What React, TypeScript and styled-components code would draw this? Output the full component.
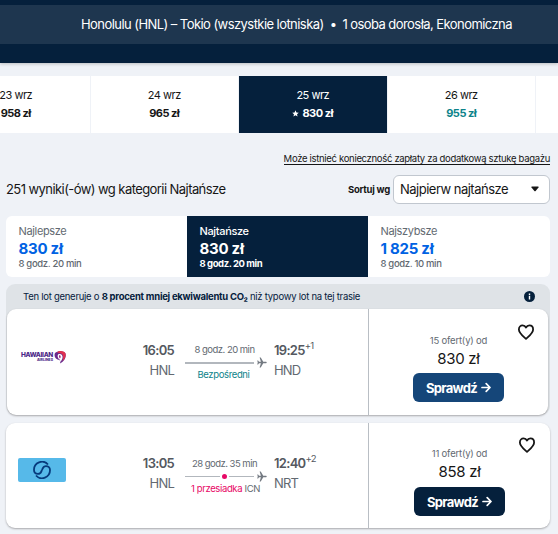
import React, { useState } from 'react';
import styled, { createGlobalStyle } from 'styled-components';

const GlobalStyle = createGlobalStyle`
  * {
    box-sizing: border-box;
  }

  body {
    margin: 0;
    background: #eff2f7;
    color: #161616;
    font-family: Inter, 'Noto Sans', sans-serif;
    overflow: hidden;
  }

  button {
    font-family: inherit;
    border: none;
    cursor: pointer;
  }
`;

const Page = styled.div`
  width: 558px;
  height: 534px;
  overflow: hidden;
  white-space: nowrap;
`;

const Header = styled.header`
  height: 63px;
  padding: 5px 0 19px;
  background: #05203c;
  box-shadow: 0 1px 3px rgba(37, 32, 31, 0.25);
`;

const SearchSummary = styled.div`
  height: 39px;
  padding: 0 0 1px 35px;
  display: flex;
  align-items: center;
  justify-content: center;
  background: #1e364f;
  color: #fff;
  font-size: 13px;
  letter-spacing: -0.56px;
`;

const Dot = styled.span`
  margin: 0 6px;
`;

const DateStrip = styled.div`
  display: grid;
  grid-template-columns: repeat(5, 148.5px);
  height: 57px;
  margin: 13px 0 0 -58px;
`;

const DateCell = styled.button<{ $selected?: boolean; $low?: boolean }>`
  display: flex;
  flex-direction: column;
  align-items: center;
  padding: 10px 0 0;
  border-right: 1px solid #eff2f7;
  background: ${({ $selected }) => ($selected ? '#05203c' : '#fff')};
  color: ${({ $selected }) => ($selected ? '#fff' : '#161616')};
  font-size: 11px;
  line-height: 18px;
  letter-spacing: -0.5px;

  strong {
    display: flex;
    align-items: center;
    gap: 3px;
    color: ${({ $low }) => ($low ? '#0c838a' : 'inherit')};
    font-weight: 700;
  }
`;

const Content = styled.main`
  padding: 17px 8px 0 6px;
`;

const BaggageLink = styled.a`
  display: block;
  width: max-content;
  height: 15px;
  margin-left: auto;
  border-bottom: 1px solid #161616;
  font-size: 9.5px;
  line-height: 18px;
  letter-spacing: -0.31px;
`;

const Toolbar = styled.div`
  display: flex;
  align-items: center;
  height: 29px;
  margin: 10px 0 12px;
`;

const ResultCount = styled.span`
  flex: 1;
  padding-bottom: 2px;
  font-size: 13px;
  letter-spacing: -0.57px;
`;

const SortLabel = styled.label`
  margin-right: 3px;
  padding-bottom: 1px;
  font-size: 9.5px;
  font-weight: 700;
  letter-spacing: -0.25px;
`;

const SortSelect = styled.button`
  display: flex;
  align-items: center;
  justify-content: space-between;
  width: 157px;
  height: 29px;
  padding: 0 10px 1px 6px;
  border: 1px solid #c1c7cf;
  border-radius: 6px;
  background: #fff;
  color: #161616;
  font-size: 13px;
  letter-spacing: -0.5px;
`;

const Tabs = styled.div`
  display: grid;
  grid-template-columns: 181px 181px 182px;
  height: 61px;
  border-radius: 6px;
  overflow: hidden;
`;

const Tab = styled.button<{ $active: boolean }>`
  display: flex;
  flex-direction: column;
  align-items: flex-start;
  padding: 7px 12.5px 0;
  background: ${({ $active }) => ($active ? '#05203c' : '#fff')};
  color: ${({ $active }) => ($active ? '#fff' : '#626971')};
`;

const TabName = styled.span<{ $active: boolean }>`
  font-size: 11px;
  font-weight: ${({ $active }) => ($active ? 500 : 400)};
  line-height: 16px;
  letter-spacing: -0.35px;
`;

const TabPrice = styled.span<{ $active: boolean }>`
  color: ${({ $active }) => ($active ? '#fff' : '#0062e3')};
  font-size: 15px;
  font-weight: 700;
  line-height: 19px;
  letter-spacing: -0.25px;
`;

const TabDuration = styled.span<{ $active: boolean }>`
  font-size: 9.5px;
  font-weight: ${({ $active }) => ($active ? 700 : 500)};
  line-height: 12px;
  letter-spacing: ${({ $active }) => ($active ? -0.42 : -0.34)}px;
`;

const EcoGroup = styled.section`
  margin: 7px 0 8px;
  padding: 0 2px 0 1px;
  border-radius: 9px;
  background: #dfe3e7;
`;

const EcoBanner = styled.div`
  display: flex;
  align-items: center;
  justify-content: space-between;
  height: 25px;
  padding: 0 13px 0 16px;
  color: #05203c;
  font-size: 9.5px;
  letter-spacing: -0.26px;
`;

const FlightCard = styled.article<{ $compact: boolean }>`
  display: flex;
  height: ${({ $compact }) => ($compact ? 105 : 106)}px;
  border-radius: 9px;
  background: #fff;
  box-shadow: 0 1px 2px rgba(37, 32, 31, 0.35);
`;

const Itinerary = styled.div<{ $compact: boolean }>`
  display: flex;
  flex: none;
  width: ${({ $compact }) => ($compact ? 363 : 362)}px;
  padding-left: ${({ $compact }) => ($compact ? 12 : 11)}px;
  border-right: 1px solid #b9bec4;
`;

const Carrier = styled.div`
  display: flex;
  align-items: center;
  justify-content: center;
  width: 56px;
  height: 94px;
`;

const HawaiianLogo = styled.div`
  display: flex;
  align-items: center;
  gap: 1px;
  margin: 2px 5px 0 0;
  color: #4b2787;
`;

const HawaiianName = styled.div`
  display: flex;
  flex-direction: column;
  align-items: flex-end;
  font-size: 6.5px;
  font-weight: 800;
  line-height: 6px;
  letter-spacing: -0.3px;

  small {
    font-size: 3.5px;
    line-height: 4px;
    letter-spacing: 0;
  }
`;

const KoreanLogo = styled.div`
  display: flex;
  align-items: center;
  justify-content: center;
  width: 48px;
  height: 24px;
  margin-right: 8px;
  border-radius: 2px;
  background: #56b9e9;
`;

const Stop = styled.div<{ $end?: boolean; $compact: boolean }>`
  display: flex;
  flex-direction: column;
  align-items: ${({ $end }) => ($end ? 'flex-end' : 'flex-start')};
  width: ${({ $end }) => ($end ? 100 : 60)}px;
  padding-top: ${({ $compact }) => ($compact ? 30 : 31)}px;
  color: #626971;
  font-size: 13px;
  line-height: 20px;
  letter-spacing: -0.8px;
`;

const Time = styled.span`
  display: flex;
  height: 20px;
  color: #545860;
  font-weight: 600;
  letter-spacing: -0.7px;

  sup {
    margin-top: -4px;
    font-size: 9.5px;
    font-weight: 400;
    line-height: 20px;
    vertical-align: baseline;
  }
`;

const Leg = styled.div`
  display: flex;
  flex-direction: column;
  align-items: center;
  width: 82px;
  margin: 0 7px 0 11px;
  padding-top: 34px;
  color: #626971;
  font-size: 9.5px;
  line-height: 14px;
`;

const Duration = styled.span`
  padding-right: 3px;
  letter-spacing: -0.52px;
`;

const LegLine = styled.div`
  display: flex;
  align-items: center;
  width: 100%;
  height: 11px;
`;

const Track = styled.div<{ $direct: boolean }>`
  display: flex;
  flex: 1;
  align-items: center;
  justify-content: center;
  height: ${({ $direct }) => ($direct ? 2 : 1)}px;
  margin-right: 3px;
  background: #b2b7bd;
`;

const StopDot = styled.span`
  width: 9px;
  height: 9px;
  margin-left: 10px;
  border: 2px solid #fff;
  border-radius: 50%;
  background: #e70866;
  box-sizing: content-box;
  width: 5px;
  height: 5px;
`;

const LegNote = styled.span<{ $direct: boolean }>`
  padding-right: ${({ $direct }) => ($direct ? 5 : 1)}px;
  letter-spacing: -0.36px;

  em {
    color: ${({ $direct }) => ($direct ? '#0c838a' : '#e70866')};
    font-style: normal;
  }
`;

const Offer = styled.div<{ $compact: boolean }>`
  display: flex;
  flex: 1;
  flex-direction: column;
  align-items: center;
  position: relative;
  padding-top: ${({ $compact }) => ($compact ? 23 : 24)}px;
`;

const SaveButton = styled.button<{ $compact: boolean }>`
  position: absolute;
  top: ${({ $compact }) => ($compact ? 13 : 14)}px;
  right: ${({ $compact }) => ($compact ? 14 : 13)}px;
  width: 18px;
  height: 18px;
  padding: 0;
  background: none;
`;

const OfferCount = styled.span`
  color: #626971;
  font-size: 9.5px;
  line-height: 15px;
  letter-spacing: -0.2px;
`;

const OfferPrice = styled.span`
  font-size: 15px;
  line-height: 21px;
  letter-spacing: -0.3px;
`;

const CheckButton = styled.button<{ $hovered: boolean }>`
  display: flex;
  align-items: center;
  justify-content: center;
  gap: 4px;
  width: 91px;
  height: 29px;
  margin-top: ${({ $hovered }) => ($hovered ? 4 : 5)}px;
  padding: 0;
  border-radius: 6px;
  background: ${({ $hovered }) => ($hovered ? '#154679' : '#05203c')};
  color: #fff;
  font-size: 13px;
  font-weight: 700;
  letter-spacing: -0.7px;
`;

interface Flight {
  carrier: 'hawaiian' | 'korean';
  departure: string;
  arrival: string;
  dayShift: string;
  from: string;
  to: string;
  duration: string;
  via?: string;
  offers: number;
  price: string;
}

const dates = [
  { day: '23 wrz', price: '958 zł' },
  { day: '24 wrz', price: '965 zł' },
  { day: '25 wrz', price: '830 zł', selected: true },
  { day: '26 wrz', price: '955 zł', low: true },
  { day: '', price: '' },
];

const tabs = [
  { name: 'Najlepsze', price: '830 zł', duration: '8 godz. 20 min' },
  { name: 'Najtańsze', price: '830 zł', duration: '8 godz. 20 min' },
  { name: 'Najszybsze', price: '1 825 zł', duration: '8 godz. 10 min' },
];

const flights: Flight[] = [
  { carrier: 'hawaiian', departure: '16:05', arrival: '19:25', dayShift: '+1', from: 'HNL', to: 'HND', duration: '8 godz. 20 min', offers: 15, price: '830 zł' },
  { carrier: 'korean', departure: '13:05', arrival: '12:40', dayShift: '+2', from: 'HNL', to: 'NRT', duration: '28 godz. 35 min', via: 'ICN', offers: 11, price: '858 zł' },
];

const StarIcon = () => (
  <svg width="7" height="7" viewBox="0 0 24 24" fill="currentColor">
    <path d="M12 1l3.2 7.4 8 .7-6 5.3 1.8 7.8-7-4.1-7 4.1 1.8-7.8-6-5.3 8-.7z" />
  </svg>
);

const PlaneIcon = () => (
  <svg width="10" height="11" viewBox="0 0 20 22" fill="#747a82">
    <path d="M19.500 11c0-1-1-1.500-2-1.500h-5L7.500 1H5.200l2.600 8.500H4L2.200 7H.5l1 4-1 4h1.700L4 12.500h3.800L5.200 21h2.300l5-8.500h5c1 0 2-.5 2-1.500z" />
  </svg>
);

const HeartIcon = () => (
  <svg width="18" height="18" viewBox="0 0 18 18" fill="none" stroke="#161616" strokeWidth="1.8" strokeLinejoin="round">
    <path d="M9 15.800C6.500 13.500 1.900 10.300 1.900 6.500c0-2.400 1.600-4.100 3.700-4.100 1.500 0 2.700.8 3.400 2.100.7-1.300 1.900-2.100 3.400-2.100 2.100 0 3.700 1.700 3.700 4.100 0 3.800-4.600 7-7.100 9.300z" />
  </svg>
);

const ArrowIcon = () => (
  <svg width="10" height="11" viewBox="0 0 10 11" fill="none" stroke="currentColor" strokeWidth="1.700" strokeLinecap="round" strokeLinejoin="round">
    <path d="M1 5.500h7.800M5.200 1.700l3.800 3.800-3.800 3.800" />
  </svg>
);

const InfoIcon = () => (
  <svg width="11" height="11" viewBox="0 0 11 11">
    <circle cx="5.500" cy="5.500" r="5.500" fill="#05203c" />
    <path d="M4.800 4.800h1.400v3.700H4.800zM4.800 2.500h1.400v1.400H4.800z" fill="#fff" />
  </svg>
);

const CarrierLogo = ({ carrier }: { carrier: Flight['carrier'] }) =>
  carrier === 'hawaiian' ? (
    <HawaiianLogo>
      <HawaiianName>
        HAWAIIAN
        <small>AIRLINES</small>
      </HawaiianName>
      <svg width="12" height="13" viewBox="0 0 24 26">
        <path d="M2 4C8-1 20 0 23 5c2 8-3 16-11 20 1-3 1-5-1-7C4 18-1 11 2 4z" fill="#6a2a8c" />
        <path d="M8 1c7-2 14 0 15 4 1 6-1 11-6 15 2-6 2-13-3-15-2-1-6-1-8-2z" fill="#e0304f" />
        <path d="M10 6c5-1 8 3 7 8-1 4-3 6-5 8 1-4 0-4-2-6-3-3-4-9 0-10z" fill="#fff" />
        <path d="M11 8c3 1 3 4 1 7-2-2-3-5-1-7z" fill="#9b2c85" />
      </svg>
    </HawaiianLogo>
  ) : (
    <KoreanLogo>
      <svg width="18" height="18" viewBox="0 0 18 18" fill="none" stroke="#063a7c" strokeWidth="1.800">
        <path d="M15 3.500A8 8 0 0 0 1 9c0 2.500 1.700 3.900 4 3.900 3.200 0 3-2.300 4-3.900" />
        <path d="M3 14.500A8 8 0 0 0 17 9c0-2.500-1.700-3.900-4-3.900-3.200 0-3 2.300-4 3.900" />
      </svg>
    </KoreanLogo>
  );

const FlightRow = ({ flight, hovered = false }: { flight: Flight; hovered?: boolean }) => {
  const direct = !flight.via;
  const compact = !hovered;

  return (
    <FlightCard $compact={compact}>
      <Itinerary $compact={compact}>
        <Carrier>
          <CarrierLogo carrier={flight.carrier} />
        </Carrier>
        <Stop $end $compact={compact}>
          <Time>{flight.departure}</Time>
          <span>{flight.from}</span>
        </Stop>
        <Leg>
          <Duration>{flight.duration}</Duration>
          <LegLine>
            <Track $direct={direct}>{!direct && <StopDot />}</Track>
            <PlaneIcon />
          </LegLine>
          <LegNote $direct={direct}>
            <em>{direct ? 'Bezpośredni' : '1 przesiadka'}</em>
            {flight.via && ` ${flight.via}`}
          </LegNote>
        </Leg>
        <Stop $compact={compact}>
          <Time>
            {flight.arrival}
            <sup>{flight.dayShift}</sup>
          </Time>
          <span>{flight.to}</span>
        </Stop>
      </Itinerary>
      <Offer $compact={compact}>
        <SaveButton $compact={compact} aria-label="Zapisz">
          <HeartIcon />
        </SaveButton>
        <OfferCount>{flight.offers} ofert(y) od</OfferCount>
        <OfferPrice>{flight.price}</OfferPrice>
        <CheckButton $hovered={hovered}>
          Sprawdź
          <ArrowIcon />
        </CheckButton>
      </Offer>
    </FlightCard>
  );
};

export default function App() {
  const [activeTab, setActiveTab] = useState(1);

  return (
    <Page>
      <GlobalStyle />
      <Header>
        <SearchSummary>
          Honolulu (HNL) – Tokio (wszystkie lotniska)
          <Dot>•</Dot>
          1 osoba dorosła, Ekonomiczna
        </SearchSummary>
      </Header>

      <DateStrip>
        {dates.map((date, i) => (
          <DateCell key={i} $selected={date.selected} $low={date.low}>
            <span>{date.day}</span>
            <strong>
              {date.selected && <StarIcon />}
              {date.price}
            </strong>
          </DateCell>
        ))}
      </DateStrip>

      <Content>
        <BaggageLink>Może istnieć konieczność zapłaty za dodatkową sztukę bagażu</BaggageLink>

        <Toolbar>
          <ResultCount>251 wyniki(-ów) wg kategorii Najtańsze</ResultCount>
          <SortLabel>Sortuj wg</SortLabel>
          <SortSelect>
            Najpierw najtańsze
            <svg width="8" height="6" viewBox="0 0 8 6">
              <path d="M.8.500h6.400q.8.300.3 1L4.600 5q-.6.600-1.200 0L.5 1.500Q0 .8.800.500z" fill="#161616" />
            </svg>
          </SortSelect>
        </Toolbar>

        <Tabs>
          {tabs.map((tab, i) => (
            <Tab key={tab.name} $active={i === activeTab} onClick={() => setActiveTab(i)}>
              <TabName $active={i === activeTab}>{tab.name}</TabName>
              <TabPrice $active={i === activeTab}>{tab.price}</TabPrice>
              <TabDuration $active={i === activeTab}>{tab.duration}</TabDuration>
            </Tab>
          ))}
        </Tabs>

        <EcoGroup>
          <EcoBanner>
            <span>
              Ten lot generuje o <b>8 procent mniej ekwiwalentu CO₂</b> niż typowy lot na tej trasie
            </span>
            <InfoIcon />
          </EcoBanner>
          <FlightRow flight={flights[0]} hovered />
        </EcoGroup>

        <FlightRow flight={flights[1]} />
      </Content>
    </Page>
  );
}
